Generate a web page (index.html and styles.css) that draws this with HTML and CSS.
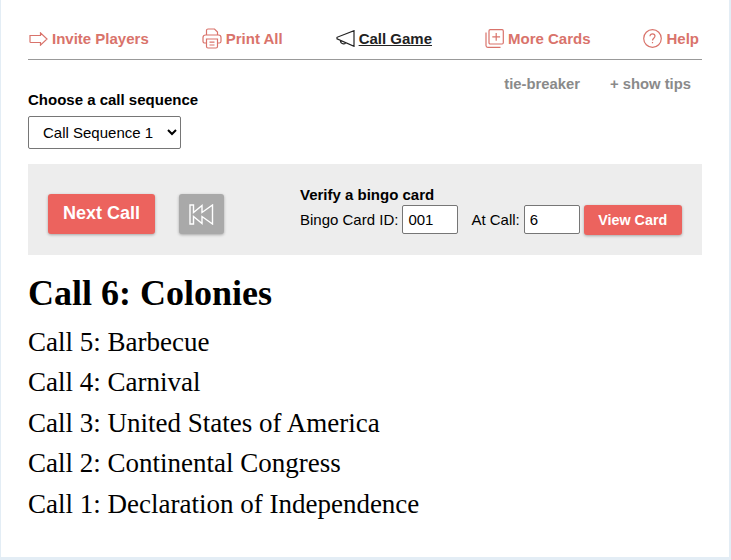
FILE: index.html
```html
<!DOCTYPE html>
<html lang="en">
  <head>
    <meta charset="UTF-8" />
    <title>Bingo Caller</title>
    <link rel="stylesheet" href="styles.css">
  </head>

  <body>
    <div class="page">
      <nav class="menu">
        <a class="menu-item" href="#">
          <svg class="icon" width="19" height="14" viewBox="0 0 19 14"><path d="M1 3.500h10.500V.9L18 7l-6.500 6.100V10.500H1.800C1.300 10.500 1 10.200 1 9.700z"/></svg>
          Invite Players
        </a>
        <a class="menu-item" href="#">
          <svg class="icon" width="20" height="21" viewBox="0 0 20 21"><path d="M4.500 7V2.500C4.500 1.600 5.200 1 6 1h6.500L15.500 4v3M4.500 15H2.800C1.800 15 1 14.200 1 13.200V9.500C1 8.100 2.100 7 3.500 7h13C17.900 7 19 8.100 19 9.500v3.700c0 1-.8 1.800-1.800 1.800h-1.700M4.500 11h11v7.500c0 .8-.7 1.500-1.500 1.500H6c-.8 0-1.500-.7-1.500-1.500zM7.500 14.200h5M7.500 17h5"/></svg>
          Print All
        </a>
        <a class="menu-item active" href="#">
          <svg class="icon" width="19" height="17" viewBox="0 0 19 17"><path d="M18 .7v15.600L1 8.800V7.300zM4.500 10.600c-.3 1.800 1.300 3.400 3 3.300 1 0 1.800-.5 2.200-1.200"/></svg>
          <span>Call Game</span>
        </a>
        <a class="menu-item" href="#">
          <svg class="icon" width="19" height="19" viewBox="0 0 19 19"><rect x="4" y=".7" width="14.300" height="14.300" rx="1.200"/><path d="M11.200 4v7.800M7.300 7.900h7.800M1 3.500v13c0 1 .8 1.800 1.800 1.800H15.500"/></svg>
          More Cards
        </a>
        <a class="menu-item" href="#">
          <svg class="icon" width="19" height="19" viewBox="0 0 19 19"><circle cx="9.500" cy="9.500" r="8.800"/><path d="M7 7.200C7 5.800 8.100 4.800 9.500 4.800s2.500 1 2.500 2.300c0 2-2.500 2.200-2.500 4.300M9.500 13v1.300"/></svg>
          Help
        </a>
      </nav>

      <div class="tips">
        <a href="#">tie-breaker</a>
        <a href="#">+ show tips</a>
      </div>

      <label class="sequence-label" for="sequence">Choose a call sequence</label>
      <select class="sequence" id="sequence">
        <option>Call Sequence 1</option>
      </select>

      <div class="controls">
        <button class="btn next-call">Next Call</button>
        <button class="btn rewind" aria-label="Restart">
          <svg width="25" height="21" viewBox="0 0 25 21"><path d="M1 1h3.500v7.500L13 1.500v7l10.500-7.500v19L13 12.500v7L4.500 12.500V20H1z"/></svg>
        </button>
        <div class="verify">
          <h4>Verify a bingo card</h4>
          <div class="verify-row">
            <label for="card-id">Bingo Card ID:</label>
            <input class="card-id" id="card-id" type="text" value="001">
            <label class="at-call" for="at-call">At Call:</label>
            <input class="card-id" id="at-call" type="text" value="6">
            <button class="btn view-card">View Card</button>
          </div>
        </div>
      </div>

      <h2 class="current">Call 6: Colonies</h2>
      <ul class="calls">
        <li>Call 5: Barbecue</li>
        <li>Call 4: Carnival</li>
        <li>Call 3: United States of America</li>
        <li>Call 2: Continental Congress</li>
        <li>Call 1: Declaration of Independence</li>
      </ul>
    </div>
  </body>
</html>
```

FILE: styles.css
```css
html,
body {
  height: 100%;
}

body {
  margin: 0;
  background-color: #e3edf5;
  font-family: "Liberation Sans", Arial, sans-serif;
  overflow: hidden;
}

.page {
  box-sizing: border-box;
  width: 728px;
  height: 557px;
  margin-left: 1px;
  padding: 22px 27px 0;
  background-color: white;
}

.menu {
  display: flex;
  justify-content: space-between;
  align-items: center;
  height: 33px;
  padding: 0 3px 4px 1px;
  border-bottom: 1px solid #999;
}

.menu-item {
  display: flex;
  align-items: center;
  gap: 4px;
  color: #d9736b;
  font-size: 15px;
  font-weight: bold;
  text-decoration: none;
}

.menu-item.active {
  color: #222;
}

.menu-item.active span {
  text-decoration: underline;
}

.icon {
  fill: none;
  stroke: currentColor;
  stroke-width: 1.200;
}

.tips {
  display: flex;
  justify-content: flex-end;
  gap: 30px;
  padding: 16px 11px 0 0;
  font-size: 14.800px;
  font-weight: bold;
  line-height: 16px;
}

.tips a {
  color: #8a8a8a;
  text-decoration: none;
}

.sequence-label {
  display: block;
  font-size: 15px;
  font-weight: bold;
  line-height: 16px;
  color: black;
}

.sequence {
  display: block;
  box-sizing: border-box;
  width: 153px;
  height: 33px;
  margin-top: 8px;
  padding-left: 10px;
  border: 1px solid #767676;
  border-radius: 2px;
  background-color: white;
  font-family: inherit;
  font-size: 15px;
}

.controls {
  display: flex;
  align-items: flex-start;
  height: 68px;
  margin-top: 15px;
  padding: 23px 0 0 20px;
  background-color: #ededed;
}

.btn {
  border: 0;
  border-radius: 3px;
  background-color: #ec635e;
  box-shadow: 0 1px 3px rgba(0, 0, 0, 0.3);
  color: white;
  font-family: inherit;
  font-weight: bold;
}

.next-call {
  width: 107px;
  height: 40px;
  margin-top: 7px;
  padding: 0 0 2px;
  font-size: 18px;
}

.rewind {
  display: flex;
  align-items: center;
  justify-content: center;
  width: 45px;
  height: 40px;
  margin: 7px 0 0 24px;
  padding: 0;
  background-color: #a9a9a9;
}

.rewind svg {
  fill: none;
  stroke: white;
  stroke-width: 1.400;
}

.verify {
  margin-left: 76px;
}

.verify h4 {
  margin: 0 0 2px;
  font-size: 15px;
  line-height: 16px;
}

.verify-row {
  display: flex;
  align-items: center;
  height: 29px;
  font-size: 15px;
}

.card-id {
  box-sizing: border-box;
  width: 56px;
  height: 29px;
  margin-left: 4px;
  padding: 0 5px;
  border: 1px solid #767676;
  border-radius: 2px;
  font-family: inherit;
  font-size: 15px;
}

.at-call {
  margin-left: 13px;
}

.view-card {
  align-self: flex-start;
  width: 98px;
  height: 30px;
  margin-left: 4px;
  padding: 0;
  font-size: 14.300px;
}

.current {
  margin: 18px 0 0;
  font-family: "Liberation Serif", "Times New Roman", serif;
  font-size: 36px;
  line-height: 40px;
}

.calls {
  margin: 9px 0 0;
  padding: 0;
  list-style-type: none;
  font-family: "Liberation Serif", "Times New Roman", serif;
  font-size: 27px;
  line-height: 40.400px;
}
```
